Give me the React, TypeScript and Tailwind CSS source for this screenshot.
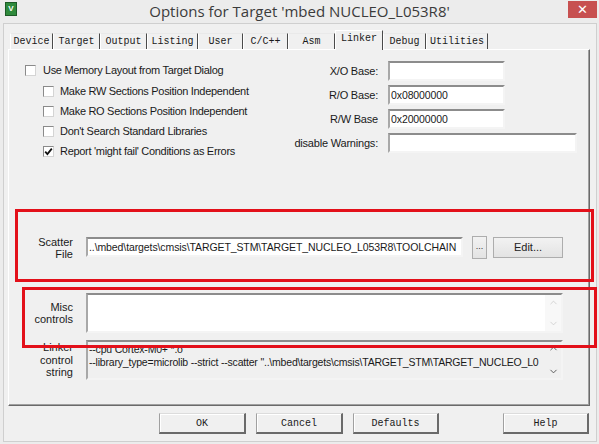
import React from "react";
import { ChevronUp, ChevronDown } from "lucide-react";

const tabs = [
  { label: "Device", w: "w-[43px]" },
  { label: "Target", w: "w-[47px]" },
  { label: "Output", w: "w-[47px]" },
  { label: "Listing", w: "w-[51px]" },
  { label: "User", w: "w-[45px]" },
  { label: "C/C++", w: "w-[45px]" },
  { label: "Asm", w: "w-[47px]" },
  { label: "Linker", w: "w-[48px]", active: true },
  { label: "Debug", w: "w-[43px]" },
  { label: "Utilities", w: "w-[62px]" },
];

const options = [
  { label: "Make RW Sections Position Independent" },
  { label: "Make RO Sections Position Independent" },
  { label: "Don't Search Standard Libraries" },
  { label: "Report 'might fail' Conditions as Errors", checked: true },
];

const Check = ({ checked }: { checked?: boolean }) => (
  <span className="w-[11px] h-[11px] shrink-0 bg-white border border-t-[#8a8a8a] border-l-[#8a8a8a] border-r-[#d4d4d4] border-b-[#d4d4d4] flex items-center justify-center">
    {checked && (
      <svg width="9" height="9" viewBox="0 0 9 9">
        <path d="M1.2 4.6 L3.4 7 L7.8 1.6" fill="none" stroke="#111" strokeWidth="1.8" />
      </svg>
    )}
  </span>
);

const Field = ({ value, w }: { value?: string; w: string }) => (
  <div
    className={`${w} h-[20px] bg-white border-2 border-t-[#8c8c8c] border-l-[#a8a8a8] border-r-[#f4f4f4] border-b-[#f4f4f4] text-[10.5px] tracking-[-0.1px] leading-[16px] text-[#1a1a1a] pl-[1px] overflow-hidden whitespace-nowrap`}
  >
    {value}
  </div>
);

const ClassicButton = ({ label, w }: { label: string; w: string }) => (
  <div
    className={`${w} h-[21px] bg-[#f0f0f0] border border-t-[#dcdcdc] border-l-[#a0a0a0] border-r-2 border-b-2 border-r-[#6a6a6a] border-b-[#6a6a6a] shadow-[inset_1px_1px_0_#ffffff] flex items-center justify-center font-['Liberation_Mono',monospace] text-[10px] text-[#1a1a1a]`}
  >
    {label}
  </div>
);

const App = () => {
  return (
    <div className="w-[599px] h-[444px] bg-[#ececec] overflow-hidden relative font-['Liberation_Sans',Arial,sans-serif]">
      {/* title bar */}
      <div className="h-[23px] flex items-start">
        <div className="w-[34px] pl-[5px] pt-[2px]">
          <div className="w-[12px] h-[14px] bg-[#2f8a3c] border border-[#1d5a27] flex items-center justify-center text-[8px] leading-none font-bold text-white">
            V
          </div>
        </div>
        <div className="flex-1 text-center text-[15px] leading-[21px] pt-[1px] text-[#3b3b3b] font-['Open_Sans',sans-serif]">
          Options for Target 'mbed NUCLEO_L053R8'
        </div>
        <div className="w-[34px] pt-[1px] flex justify-end pr-[2px]">
          <div className="w-[29px] h-[17px] bg-[#c75050] flex items-center justify-center text-white text-[13px] leading-none">
            ✕
          </div>
        </div>
      </div>

      {/* dialog body */}
      <div className="ml-[3px] w-[594px] h-[419px] bg-[#f0f0f0] border-t border-l border-r border-b border-[#cfcfcf]">
        {/* tabs */}
        <div className="h-[25px] pl-[6px] flex items-end font-['Liberation_Mono',monospace] text-[10px] text-[#1a1a1a]">
          {tabs.map((t) =>
            t.active ? (
              <div
                key={t.label}
                className={`${t.w} h-[20px] relative top-[1px] z-10 bg-[#f0f0f0] border-l border-t border-l-white border-t-white border-r border-r-[#4a4a4a] flex justify-center pt-[2px] leading-[12px]`}
              >
                {t.label}
              </div>
            ) : (
              <div
                key={t.label}
                className={`${t.w} h-[16px] border-l border-t border-l-white border-t-[#e9e9e9] border-r border-r-[#4a4a4a] flex items-center justify-center leading-[12px]`}
              >
                {t.label}
              </div>
            )
          )}
        </div>

        {/* tab panel */}
        <div className="ml-[4px] w-[582px] h-[357px] border-t border-l border-t-white border-l-white border-r border-b border-r-[#6a6a6a] border-b-[#6a6a6a] shadow-[inset_-1px_-1px_0_#a0a0a0] text-[11px] text-[#1a1a1a]">
          <div className="h-[185px] flex">
            <div className="ml-[16px] w-[265px] pt-[10px] tracking-[-0.3px]">
              <div className="h-[21px] flex items-center">
                <Check />
                <span className="ml-[7px]">Use Memory Layout from Target Dialog</span>
              </div>
              {options.map((o) => (
                <div key={o.label} className="h-[20px] flex items-center pl-[18px]">
                  <Check checked={o.checked} />
                  <span className="ml-[6px]">{o.label}</span>
                </div>
              ))}
            </div>
            <div className="pt-[11px] flex flex-col gap-[4px] tracking-[-0.2px]">
              <div className="flex items-center">
                <span className="w-[88px] text-right mr-[10px]">X/O Base:</span>
                <Field w="w-[117px]" />
              </div>
              <div className="flex items-center">
                <span className="w-[88px] text-right mr-[10px]">R/O Base:</span>
                <Field w="w-[117px]" value="0x08000000" />
              </div>
              <div className="flex items-center">
                <span className="w-[88px] text-right mr-[10px]">R/W Base</span>
                <Field w="w-[117px]" value="0x20000000" />
              </div>
              <div className="flex items-center">
                <span className="w-[88px] text-right mr-[10px]">disable Warnings:</span>
                <Field w="w-[189px]" />
              </div>
            </div>
          </div>

          {/* scatter file */}
          <div className="h-[24px] flex items-center">
            <div className="w-[64px] mr-[13px] text-right leading-[12px] pt-[2px]">
              Scatter
              <br />
              File
            </div>
            <Field w="w-[377px]" value="..\mbed\targets\cmsis\TARGET_STM\TARGET_NUCLEO_L053R8\TOOLCHAIN" />
            <div className="ml-[9px] w-[15px] h-[23px] bg-gradient-to-b from-[#f2f2f2] to-[#e3e3e3] border border-[#adadad] flex items-center justify-center text-[9px] text-[#333]">
              ...
            </div>
            <div className="ml-[6px] w-[70px] h-[21px] bg-gradient-to-b from-[#f2f2f2] to-[#e3e3e3] border border-[#adadad] flex items-center justify-center text-[11px] text-[#222]">
              Edit...
            </div>
          </div>

          {/* misc controls */}
          <div className="mt-[34px] h-[40px] flex items-center">
            <div className="w-[64px] mr-[13px] text-right leading-[12px]">
              Misc
              <br />
              controls
            </div>
            <div className="w-[477px] h-[40px] bg-white border-2 border-t-[#8c8c8c] border-l-[#a8a8a8] border-r-[#f4f4f4] border-b-[#f4f4f4] flex">
              <div className="flex-1" />
              <div className="w-[16px] flex flex-col items-center justify-between py-[2px] bg-[#f8f8f8]">
                <ChevronUp size={11} strokeWidth={1.5} color="#c4c4c4" />
                <ChevronDown size={11} strokeWidth={1.5} color="#c4c4c4" />
              </div>
            </div>
          </div>

          {/* linker control string */}
          <div className="mt-[7px] h-[40px] flex items-center">
            <div className="w-[64px] mr-[13px] text-right leading-[12.5px]">
              Linker
              <br />
              control
              <br />
              string
            </div>
            <div className="w-[477px] h-[40px] bg-[#f0f0f0] border-2 border-t-[#8c8c8c] border-l-[#a8a8a8] border-r-[#f4f4f4] border-b-[#f4f4f4] flex">
              <div className="w-[458px] overflow-hidden whitespace-nowrap pl-[1px] leading-[13px] pt-[1px] text-[10.5px] tracking-[-0.2px]">
                --cpu Cortex-M0+ *.o
                <br />
                --library_type=microlib --strict --scatter "..\mbed\targets\cmsis\TARGET_STM\TARGET_NUCLEO_L0
              </div>
              <div className="flex-1 flex flex-col items-center justify-between py-[1px]">
                <ChevronUp size={11} strokeWidth={2} color="#505050" />
                <ChevronDown size={11} strokeWidth={2} color="#505050" />
              </div>
            </div>
          </div>
        </div>

        {/* buttons */}
        <div className="mt-[7px] ml-[155px] flex">
          <ClassicButton label="OK" w="w-[87px]" />
          <div className="ml-[10px]">
            <ClassicButton label="Cancel" w="w-[87px]" />
          </div>
          <div className="ml-[10px]">
            <ClassicButton label="Defaults" w="w-[86px]" />
          </div>
          <div className="ml-[64px]">
            <ClassicButton label="Help" w="w-[86px]" />
          </div>
        </div>
      </div>

      {/* red annotation boxes */}
      <div className="absolute left-[15px] top-[209px] w-[579px] h-[73px] border-[3px] border-[#e3101a] pointer-events-none" />
      <div className="absolute left-[22px] top-[287px] w-[575px] h-[61px] border-[3px] border-[#e3101a] pointer-events-none" />
    </div>
  );
};

export default App;
